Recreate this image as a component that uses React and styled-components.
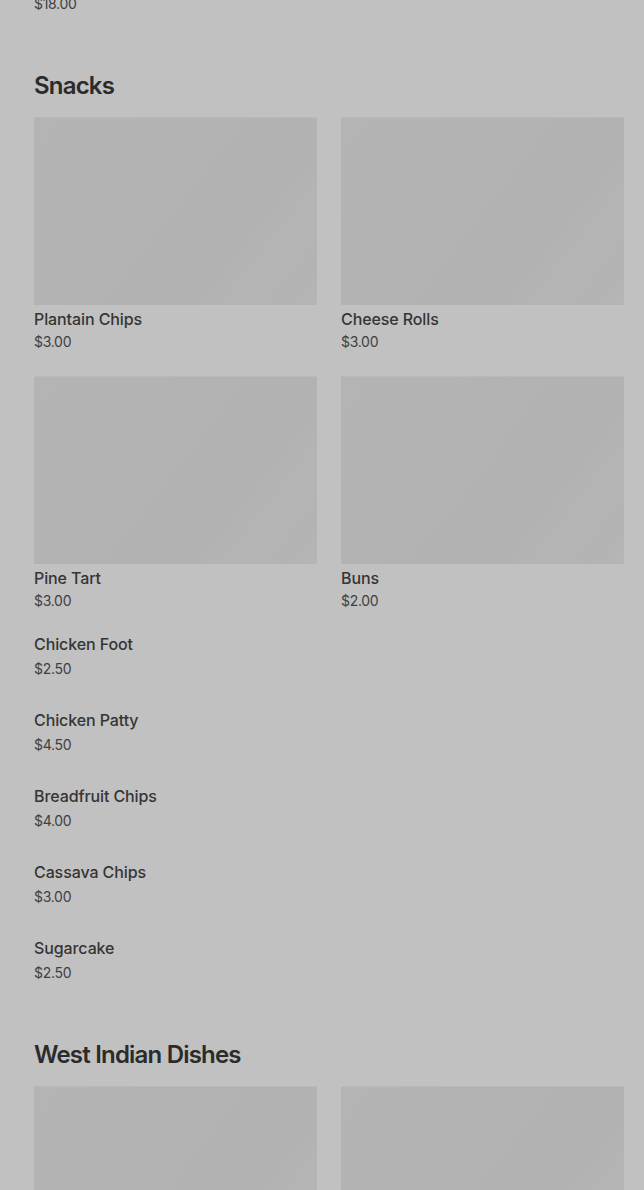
import React from "react";
import styled, { createGlobalStyle } from "styled-components";

const Global = createGlobalStyle`
  html, body { margin: 0; padding: 0; background: #c1c1c1; }
  body { font-family: Inter, "Noto Sans", "Liberation Sans", sans-serif; color: #2f2f2f; overflow: hidden; }
`;

const Page = styled.main`
  padding: 0 20px 0 34px;
  margin-top: -45px;
`;

const Section = styled.section`
  display: flex;
  flex-direction: column;
`;

const Heading = styled.h2`
  margin: 39px 0 15px;
  font-size: 24px;
  line-height: 32px;
  font-weight: 600;
  letter-spacing: -0.8px;
  color: #2b2b2b;
`;

const Grid = styled.div`
  display: grid;
  grid-template-columns: repeat(2, 283px);
  column-gap: 24px;
  row-gap: 24px;
  margin-bottom: 9px;
`;

const Card = styled.div`
  display: flex;
  flex-direction: column;
`;

const Thumb = styled.div`
  height: 187px;
  background: linear-gradient(
    128deg,
    #b4b4b4 0%,
    #b2b2b2 70%,
    #b5b5b5 82%,
    #b3b3b3 92%,
    #b6b6b6 100%
  );
  border-top: 1px solid #b9b9b9;
  margin-bottom: 2px;
`;

const Name = styled.div`
  font-size: 16px;
  line-height: 24px;
  font-weight: 500;
  color: #353535;
  letter-spacing: -0.1px;
`;

const Price = styled.div`
  font-size: 14px;
  line-height: 20px;
  font-weight: 400;
  color: #404040;
  letter-spacing: -0.3px;
  margin-top: ${(p) => (p.$list ? "3px" : "1px")};
`;

const ListItem = styled.div`
  display: flex;
  flex-direction: column;
  padding: 12px 0 17px;
`;

const snacksGrid = [
  { name: "Plantain Chips", price: "$3.00" },
  { name: "Cheese Rolls", price: "$3.00" },
  { name: "Pine Tart", price: "$3.00" },
  { name: "Buns", price: "$2.00" },
];

const snacksList = [
  { name: "Chicken Foot", price: "$2.50" },
  { name: "Chicken Patty", price: "$4.50" },
  { name: "Breadfruit Chips", price: "$4.00" },
  { name: "Cassava Chips", price: "$3.00" },
  { name: "Sugarcake", price: "$2.50" },
];

export default function App() {
  return (
    <>
      <Global />
      <Page>
        <Section>
          <ListItem>
            <Name>Curry Goat Dinner</Name>
            <Price $list>$18.00</Price>
          </ListItem>
        </Section>
        <Section>
          <Heading>Snacks</Heading>
          <Grid>
            {snacksGrid.map((it) => (
              <Card key={it.name}>
                <Thumb />
                <Name>{it.name}</Name>
                <Price>{it.price}</Price>
              </Card>
            ))}
          </Grid>
          {snacksList.map((it) => (
            <ListItem key={it.name}>
              <Name>{it.name}</Name>
              <Price $list>{it.price}</Price>
            </ListItem>
          ))}
        </Section>
        <Section>
          <Heading>West Indian Dishes</Heading>
          <Grid>
            <Card>
              <Thumb />
            </Card>
            <Card>
              <Thumb />
            </Card>
          </Grid>
        </Section>
      </Page>
    </>
  );
}
